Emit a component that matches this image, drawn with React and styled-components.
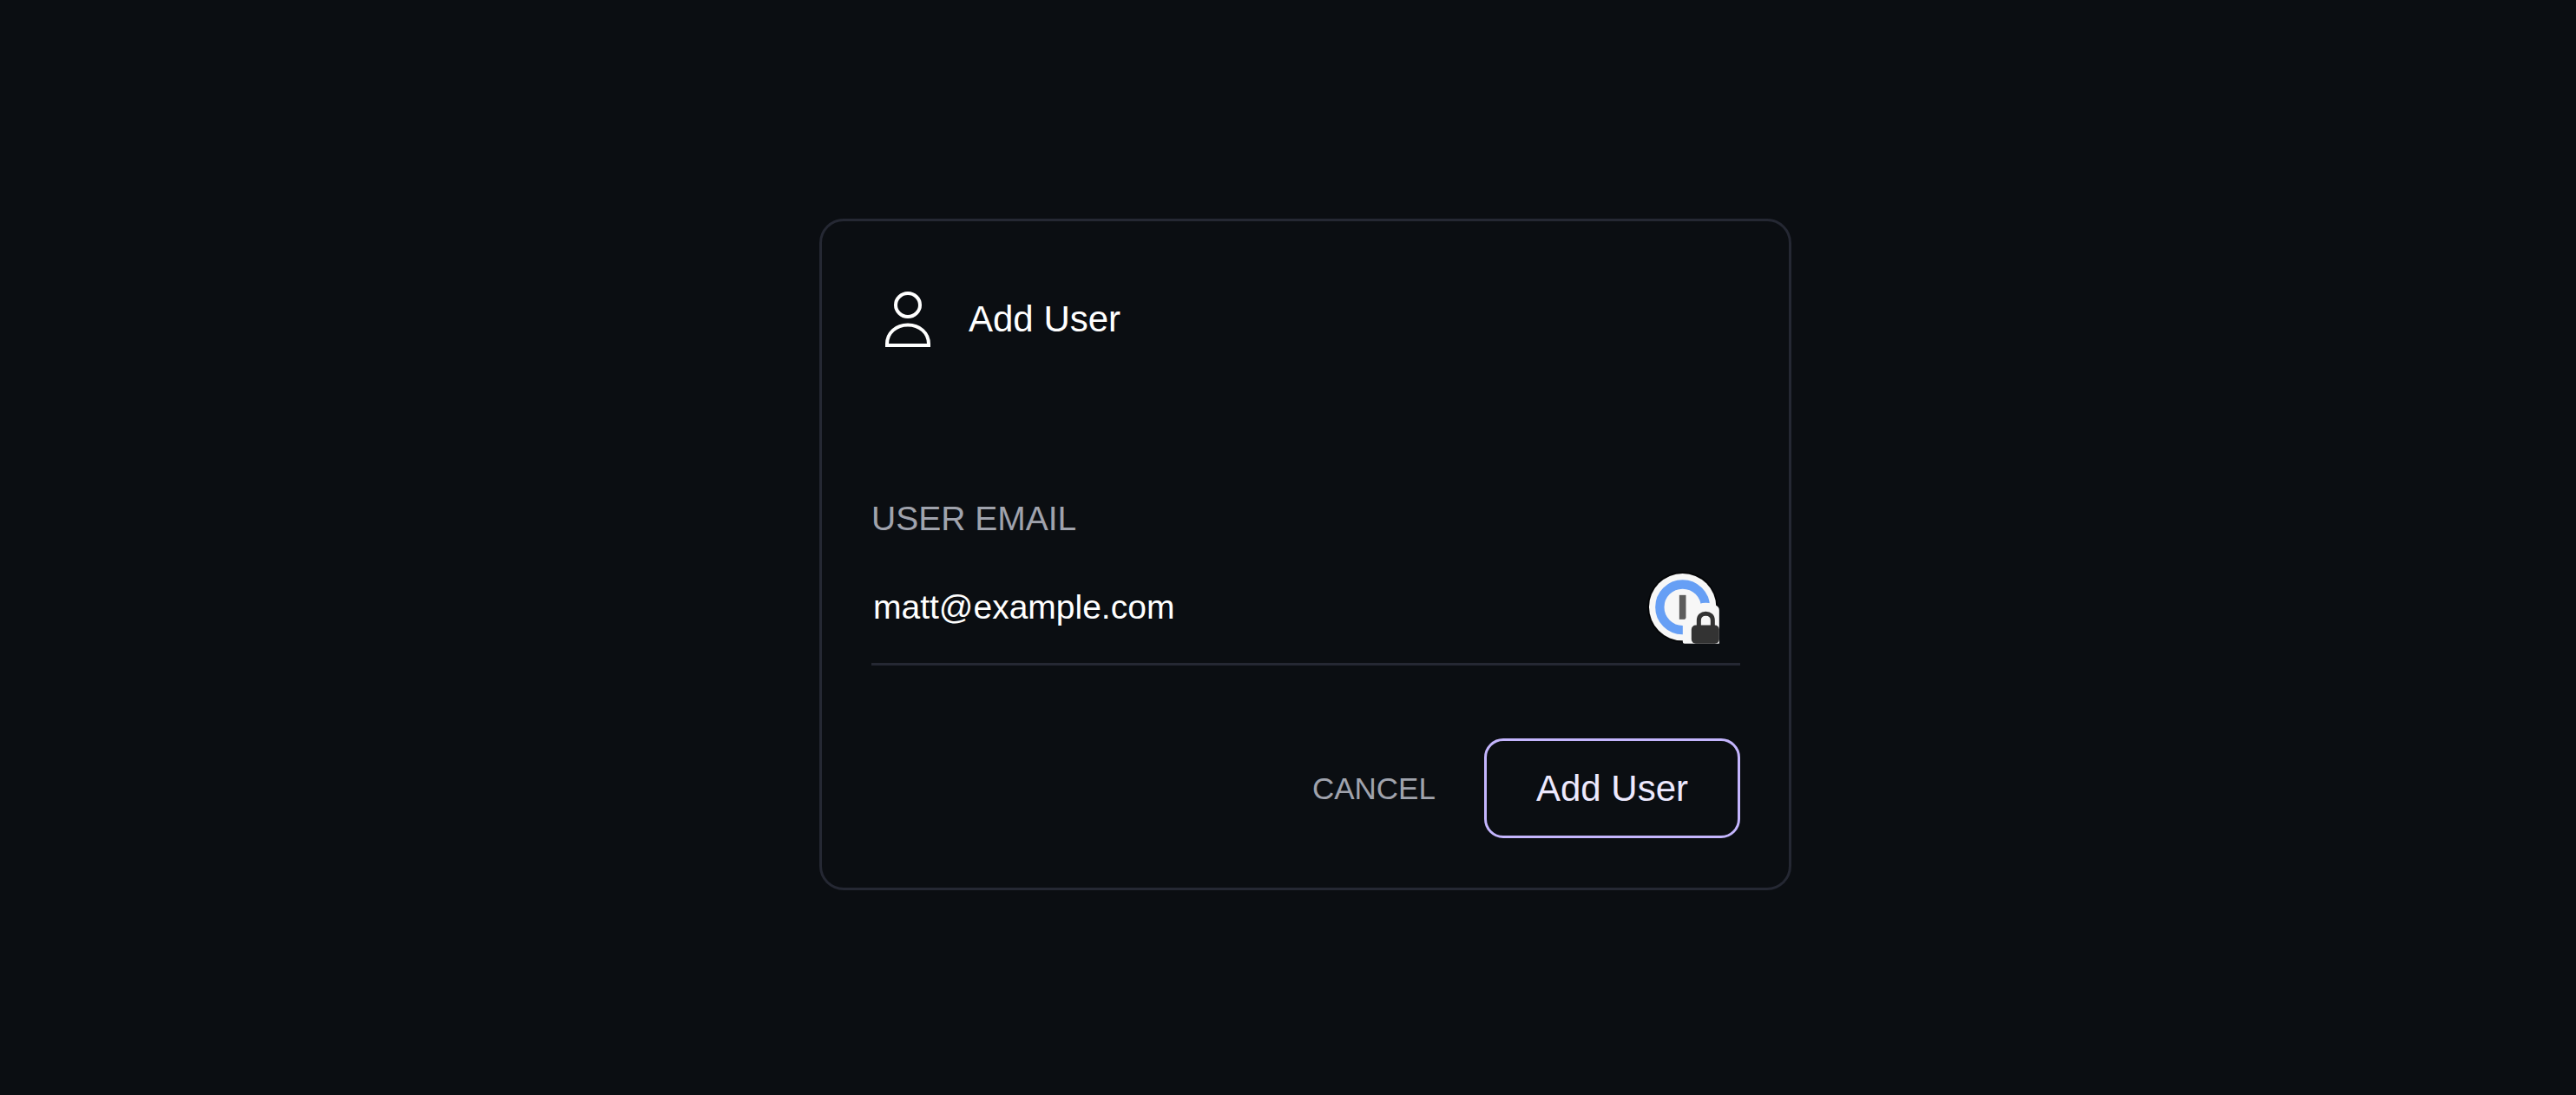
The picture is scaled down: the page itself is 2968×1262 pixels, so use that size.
import React, { useState } from "react";
import styled, { createGlobalStyle } from "styled-components";

const GlobalStyle = createGlobalStyle`
  *, *::before, *::after { box-sizing: border-box; }
  body {
    margin: 0;
    background: #0b0e12;
    color: #ffffff;
    font-family: "Liberation Sans", Arial, Helvetica, sans-serif;
  }
`;

const Page = styled.main`
  min-height: 100vh;
  display: flex;
  align-items: center;
  justify-content: center;
  padding: 16px 0 0 40px;
`;

const Card = styled.form`
  width: 100%;
  max-width: 1120px;
  padding: 57px 56px 57px 57px;
  border: 3px solid #252833;
  border-radius: 28px;
`;

const Header = styled.header`
  display: flex;
  align-items: center;
  gap: 28px;
  height: 112px;
  margin-bottom: 152px;
`;

const IconBox = styled.span`
  display: flex;
  justify-content: center;
  width: 84px;
`;

const Title = styled.h1`
  margin: 0;
  font-size: 42px;
  font-weight: 400;
  line-height: 48px;
`;

const Label = styled.label`
  display: block;
  margin-bottom: 41px;
  color: #a0a3ad;
  font-size: 39px;
  line-height: 44px;
  text-transform: uppercase;
`;

const Field = styled.div`
  display: flex;
  align-items: center;
  padding: 0 24px 22px 0;
  border-bottom: 3px solid #252833;
`;

const Input = styled.input`
  flex: 1;
  min-width: 0;
  height: 81px;
  padding: 0 2px 4px;
  border: 0;
  outline: 0;
  background: transparent;
  color: #ffffff;
  font-family: inherit;
  font-size: 39px;
`;

const ManagerButton = styled.button`
  display: block;
  padding: 0;
  border: 0;
  background: transparent;
  cursor: pointer;

  svg { display: block; overflow: visible; }
`;

const Actions = styled.footer`
  display: flex;
  justify-content: flex-end;
  align-items: center;
  gap: 56px;
  margin-top: 84px;
`;

const CancelButton = styled.button`
  padding: 0;
  border: 0;
  background: transparent;
  color: #a0a3ad;
  font-family: inherit;
  font-size: 35px;
  line-height: 40px;
  text-transform: uppercase;
  cursor: pointer;
`;

const SubmitButton = styled.button`
  height: 115px;
  padding: 0 57px;
  border: 3px solid #c4b5fd;
  border-radius: 22px;
  background: transparent;
  color: #ede9fe;
  font-family: inherit;
  font-size: 42px;
  line-height: 48px;
  cursor: pointer;
`;

function UserIcon() {
  return (
    <svg width="52" height="64" viewBox="0 0 52 64" fill="none" stroke="#fff" strokeWidth="4" aria-hidden="true">
      <ellipse cx="26" cy="15.5" rx="14" ry="13.5" />
      <path d="M2 62v-1.5C2 47.5 12.5 38.500 26 38.500S50 47.500 50 60.500V62Z" />
    </svg>
  );
}

function PasswordManagerIcon() {
  return (
    <svg width="81" height="81" viewBox="57.500 63.500 243 243" aria-hidden="true">
      <circle cx="173.500" cy="179.500" r="122" fill="#000" opacity="0.6" />
      <circle cx="173.500" cy="179.500" r="116" fill="#f7f7f7" />
      <circle cx="173.500" cy="180" r="79" fill="none" stroke="#669ff5" strokeWidth="31" />
      <rect x="162" y="138" width="23" height="84" fill="#5c5c5c" />
      <path
        d="M174 300V244C174 229 182 219 192 213C194 186 222 165 254 165C270 165 282 170 289 174Q300 180 300 190V306H180Q174 306 174 300Z"
        fill="#f7f7f7"
      />
      <path d="M229.500 250V226C229.500 211 239 202 253.500 202S277.500 211 277.500 226V250" fill="none" stroke="#333" strokeWidth="15" />
      <rect x="204" y="242" width="96" height="64" rx="15" fill="#333" />
    </svg>
  );
}

export default function App() {
  const [email, setEmail] = useState("matt@example.com");

  return (
    <>
      <GlobalStyle />
      <Page>
        <Card onSubmit={(event) => event.preventDefault()}>
          <Header>
            <IconBox>
              <UserIcon />
            </IconBox>
            <Title>Add User</Title>
          </Header>
          <Label htmlFor="user-email">User Email</Label>
          <Field>
            <Input
              id="user-email"
              type="email"
              value={email}
              onChange={(event) => setEmail(event.target.value)}
            />
            <ManagerButton type="button" aria-label="Open password manager">
              <PasswordManagerIcon />
            </ManagerButton>
          </Field>
          <Actions>
            <CancelButton type="button">Cancel</CancelButton>
            <SubmitButton type="submit">Add User</SubmitButton>
          </Actions>
        </Card>
      </Page>
    </>
  );
}
